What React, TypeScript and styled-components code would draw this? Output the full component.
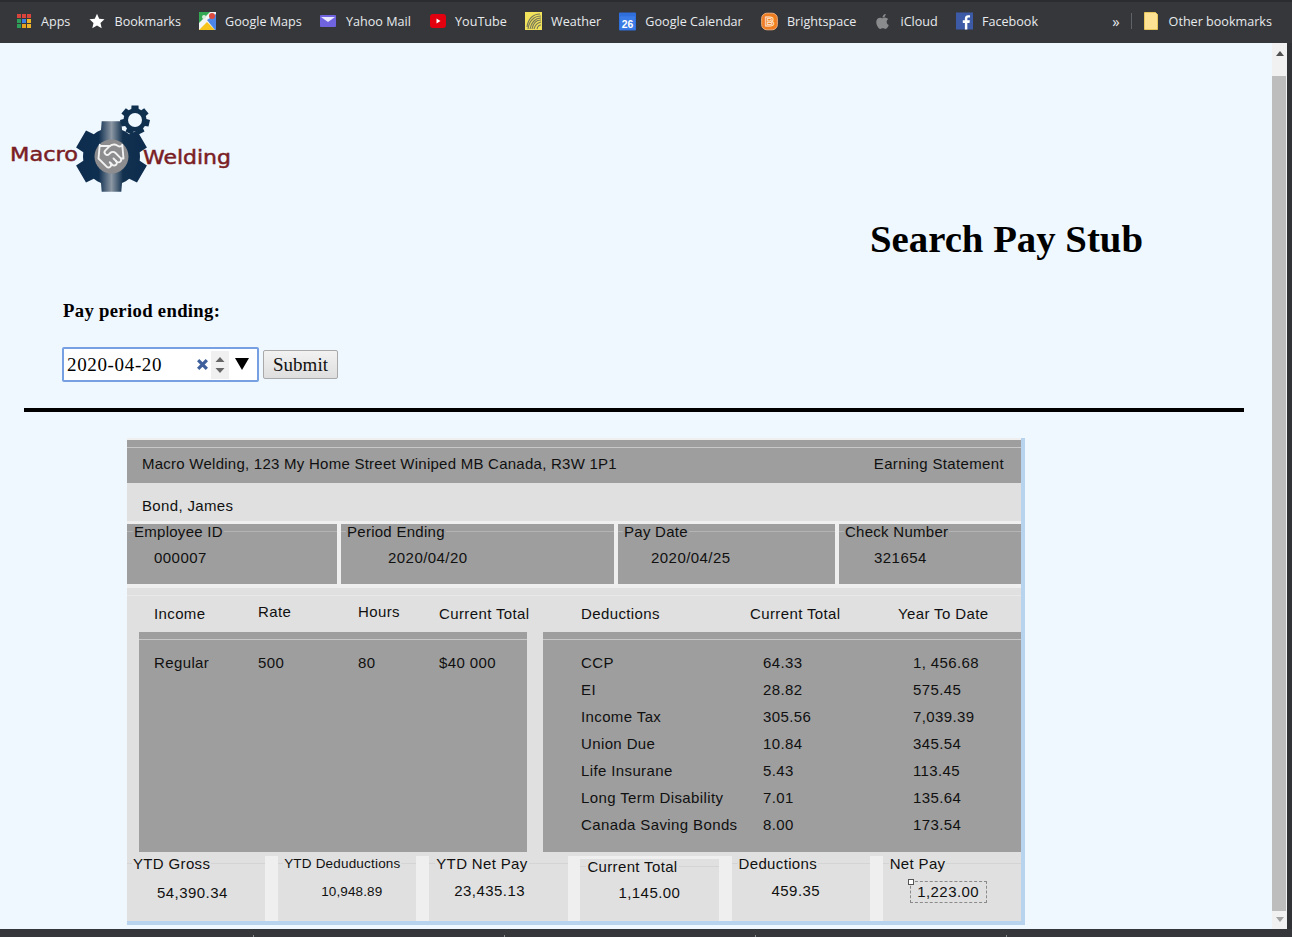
import React from 'react';
import styled, { createGlobalStyle } from 'styled-components';
import { Handshake } from 'lucide-react';
import { FaApple } from 'react-icons/fa';

const GlobalStyle = createGlobalStyle`
    html, body {
        margin: 0;
        padding: 0;
        height: 100%;
        overflow: hidden;
        background: #eff7ff;
    }
`;

// builds a cog outline from the number of teeth and its radii
const gearPath = (cx: number, cy: number, outer: number, inner: number, teeth: number) => {
    const points: string[] = [];
    const step = (Math.PI * 2) / teeth;
    for (let i = 0; i < teeth; i++) {
        const a = i * step - Math.PI / 2;
        const at = (r: number, o: number) =>
            `${(cx + r * Math.cos(a + o * step)).toFixed(1)} ${(cy + r * Math.sin(a + o * step)).toFixed(1)}`;
        points.push(at(outer, -0.26), at(outer, 0.26), at(inner, 0.36), at(inner, 0.5), at(inner, 0.64));
    }
    return `M${points.join('L')}Z`;
};

const AppsIcon = () => {
    const colors = ['#d9453c', '#d9453c', '#d9453c', '#2f9e58', '#3f7fe0', '#f0b429', '#2f9e58', '#e8a020', '#f0b429'];
    return (
        <svg width="16" height="16" viewBox="0 0 16 16">
            {colors.map((c, i) => (
                <rect key={i} x={1 + (i % 3) * 5} y={1 + Math.floor(i / 3) * 5} width="4" height="4" fill={c} />
            ))}
        </svg>
    );
};

const StarIcon = () => (
    <svg width="16" height="16" viewBox="0 0 16 16">
        <path d="M8 .8l2.2 5 5.3.5-4 3.6 1.2 5.3L8 12.4l-4.7 2.8 1.2-5.3-4-3.6 5.3-.5z" fill="#fff" />
    </svg>
);

const MapsIcon = () => (
    <svg width="17" height="18" viewBox="0 0 17 18">
        <rect width="17" height="18" fill="#35a853" />
        <path d="M0 18V11L11 0h6v18z" fill="#f4f4f4" />
        <path d="M0 18l8-8 8 8z" fill="#f6c41c" />
        <path d="M8 8l9-6v16h-1z" fill="#4b86e8" />
        <circle cx="13" cy="4" r="3" fill="#dd4b3e" />
        <circle cx="5" cy="5" r="2" fill="#d8efdc" />
    </svg>
);

const YahooIcon = () => (
    <svg width="16" height="12" viewBox="0 0 16 12">
        <rect width="16" height="12" rx="1" fill="#6f63e0" />
        <path d="M1 2h14L8 7z" fill="#e9e6ff" />
    </svg>
);

const YoutubeIcon = () => (
    <svg width="16" height="14" viewBox="0 0 16 14">
        <rect width="16" height="14" rx="3" fill="#e3000f" />
        <path d="M6.5 4.5v5l4-2.5z" fill="#fff" />
    </svg>
);

const WeatherIcon = () => (
    <svg width="17" height="18" viewBox="0 0 17 18">
        <rect width="17" height="18" fill="#f0e25a" />
        <path
            d="M2 15C3 7 8 2 15 2M3 17C4 9 9 4 16 4M5 17C6 11 10 6 16 6M7 17C8 12 11 8 16 8M9 17c1-4 3-6 7-7M12 17c.5-2 2-4 4-4"
            stroke="#77775a"
            strokeWidth="1.1"
            fill="none"
        />
    </svg>
);

const CalendarIcon = () => (
    <svg width="18" height="19" viewBox="0 0 18 19">
        <rect width="18" height="19" rx="1" fill="#2f6fdc" />
        <rect x="1" y="4" width="16" height="14" fill="#3a7be6" />
        <text x="9" y="16" textAnchor="middle" fontFamily="Liberation Sans, sans-serif" fontWeight="700" fontSize="11" fill="#fff">
            26
        </text>
    </svg>
);

const BrightspaceIcon = () => (
    <svg width="18" height="19" viewBox="0 0 18 19">
        <rect x="0.7" y="0.7" width="16.6" height="17.6" rx="5.5" fill="#ef7d22" stroke="#f5b27c" />
        <text
            x="9"
            y="14.5"
            textAnchor="middle"
            fontFamily="Liberation Sans, sans-serif"
            fontWeight="700"
            fontSize="14"
            fill="#ef7d22"
            stroke="#ffe8d2"
            strokeWidth="0.9"
        >
            B
        </text>
    </svg>
);

const FacebookIcon = () => (
    <svg width="18" height="18" viewBox="0 0 18 18">
        <rect width="18" height="18" fill="#3c5aa6" />
        <path d="M12 18v-7h2.3l.4-2.7H12V6.6c0-.8.3-1.3 1.4-1.3h1.4V2.9c-.3 0-1.1-.1-2-.1-2 0-3.4 1.2-3.4 3.5v2H7.2V11h2.2v7z" fill="#fff" />
    </svg>
);

const NoteIcon = () => (
    <svg width="14" height="18" viewBox="0 0 14 18">
        <path d="M.5.5h11l2 2v15H.5z" fill="#fde293" stroke="#e8c65c" />
    </svg>
);

const bookmarks = [
    { label: 'Apps', icon: <AppsIcon /> },
    { label: 'Bookmarks', icon: <StarIcon /> },
    { label: 'Google Maps', icon: <MapsIcon /> },
    { label: 'Yahoo Mail', icon: <YahooIcon /> },
    { label: 'YouTube', icon: <YoutubeIcon /> },
    { label: 'Weather', icon: <WeatherIcon /> },
    { label: 'Google Calendar', icon: <CalendarIcon /> },
    { label: 'Brightspace', icon: <BrightspaceIcon /> },
    { label: 'iCloud', icon: <FaApple size={17} color="#8a8b8d" /> },
    { label: 'Facebook', icon: <FacebookIcon /> },
];

const earnings = [{ name: 'Regular', rate: '500', hours: '80', total: '$40 000' }];

const deductions = [
    { name: 'CCP', current: '64.33', ytd: '1, 456.68' },
    { name: 'EI', current: '28.82', ytd: '575.45' },
    { name: 'Income Tax', current: '305.56', ytd: '7,039.39' },
    { name: 'Union Due', current: '10.84', ytd: '345.54' },
    { name: 'Life Insurane', current: '5.43', ytd: '113.45' },
    { name: 'Long Term Disability', current: '7.01', ytd: '135.64' },
    { name: 'Canada Saving Bonds', current: '8.00', ytd: '173.54' },
];

const Logo = () => (
    <LogoBox>
        <svg width="222" height="92" viewBox="0 0 222 92">
            <defs>
                <linearGradient id="steel" x1="0" x2="1" y1="0" y2="0">
                    <stop offset="0" stopColor="#0d2c4e" />
                    <stop offset="0.32" stopColor="#0f2f50" />
                    <stop offset="0.5" stopColor="#8c97a3" />
                    <stop offset="0.66" stopColor="#12314f" />
                    <stop offset="1" stopColor="#0d2c4e" />
                </linearGradient>
            </defs>
            <path d={gearPath(101.5, 53.5, 36.5, 28.5, 6)} fill="url(#steel)" />
            <circle cx="101.5" cy="53.5" r="17" fill="#8d8d8f" />
            <path d={gearPath(125, 17, 15, 11.5, 7)} fill="#10304f" />
            <circle cx="125" cy="17" r="7" fill="#eff7ff" />
            <text
                x="0"
                y="58"
                fontFamily="DejaVu Sans, sans-serif"
                fontSize="20"
                fill="#7a1d24"
                stroke="#7a1d24"
                strokeWidth="0.5"
                textLength="68"
                lengthAdjust="spacingAndGlyphs"
            >
                Macro
            </text>
            <text
                x="133"
                y="61"
                fontFamily="DejaVu Sans, sans-serif"
                fontSize="20"
                fill="#7a1d24"
                stroke="#7a1d24"
                strokeWidth="0.5"
                textLength="88"
                lengthAdjust="spacingAndGlyphs"
            >
                Welding
            </text>
        </svg>
        <LogoMark>
            <Handshake size={30} color="#f2f2f2" strokeWidth={1.5} />
        </LogoMark>
    </LogoBox>
);

const App = () => {
    return (
        <Screen>
            <GlobalStyle />
            <BookmarkBar>
                <BookmarkList>
                    {bookmarks.map((b) => (
                        <Bookmark key={b.label}>
                            <BookmarkIcon>{b.icon}</BookmarkIcon>
                            {b.label}
                        </Bookmark>
                    ))}
                </BookmarkList>
                <MoreChevron>»</MoreChevron>
                <BarDivider />
                <Bookmark>
                    <BookmarkIcon>
                        <NoteIcon />
                    </BookmarkIcon>
                    Other bookmarks
                </Bookmark>
            </BookmarkBar>

            <Viewport>
                <Page>
                    <Logo />
                    <Title>Search Pay Stub</Title>
                    <SearchForm>
                        <PeriodLabel htmlFor="period">Pay period ending:</PeriodLabel>
                        <FormRow>
                            <DateField>
                                <DateInput id="period" defaultValue="2020-04-20" readOnly />
                                <ClearMark viewBox="0 0 12 12">
                                    <path d="M2 2l8 8M10 2l-8 8" stroke="#3d5f9c" strokeWidth="3" />
                                </ClearMark>
                                <Spinner>
                                    <svg width="10" height="28" viewBox="0 0 10 28">
                                        <path d="M5 6l4.5 5H.5zM.5 17h9L5 22z" fill="#666" />
                                    </svg>
                                </Spinner>
                                <DropTriangle viewBox="0 0 14 12">
                                    <path d="M0 0h14L7 12z" fill="#000" />
                                </DropTriangle>
                            </DateField>
                            <SubmitButton type="button">Submit</SubmitButton>
                        </FormRow>
                    </SearchForm>
                    <Rule />

                    <Statement>
                        <Band>
                            <BandLine>
                                <CompanyRow>
                                    <CompanyName>Macro Welding, 123 My Home Street Winiped MB Canada, R3W 1P1</CompanyName>
                                    <span>Earning Statement</span>
                                </CompanyRow>
                            </BandLine>
                        </Band>
                        <EmployeeName>Bond, James</EmployeeName>

                        <InfoGrid>
                            <InfoCell>
                                <Field>
                                    <FieldLabel>Employee ID</FieldLabel>
                                    <FieldValue $indent={20}>000007</FieldValue>
                                </Field>
                            </InfoCell>
                            <InfoCell>
                                <Field>
                                    <FieldLabel $offset={5}>Period Ending</FieldLabel>
                                    <FieldValue $indent={40}>2020/04/20</FieldValue>
                                </Field>
                            </InfoCell>
                            <InfoCell>
                                <Field>
                                    <FieldLabel $offset={5}>Pay Date</FieldLabel>
                                    <FieldValue $indent={26}>2020/04/25</FieldValue>
                                </Field>
                            </InfoCell>
                            <InfoCell>
                                <Field>
                                    <FieldLabel $offset={5}>Check Number</FieldLabel>
                                    <FieldValue $indent={28}>321654</FieldValue>
                                </Field>
                            </InfoCell>
                        </InfoGrid>

                        <Details>
                            <DetailHeads>
                                <EarningsRow>
                                    <span>Income</span>
                                    <RaisedHead>Rate</RaisedHead>
                                    <RaisedHead>Hours</RaisedHead>
                                    <span>Current Total</span>
                                </EarningsRow>
                                <DeductionsRow>
                                    <span>Deductions</span>
                                    <span>Current Total</span>
                                    <span>Year To Date</span>
                                </DeductionsRow>
                            </DetailHeads>
                            <DetailPanels>
                                <Band>
                                    <BandLine>
                                        <PanelBody>
                                            {earnings.map((e) => (
                                                <EarningsRow key={e.name}>
                                                    <span>{e.name}</span>
                                                    <span>{e.rate}</span>
                                                    <span>{e.hours}</span>
                                                    <span>{e.total}</span>
                                                </EarningsRow>
                                            ))}
                                        </PanelBody>
                                    </BandLine>
                                </Band>
                                <Band>
                                    <BandLine>
                                        <PanelBody>
                                            {deductions.map((d) => (
                                                <DeductionValues key={d.name}>
                                                    <span>{d.name}</span>
                                                    <span>{d.current}</span>
                                                    <span>{d.ytd}</span>
                                                </DeductionValues>
                                            ))}
                                        </PanelBody>
                                    </BandLine>
                                </Band>
                            </DetailPanels>
                        </Details>

                        <TotalsGrid>
                            <TotalCell>
                                <TotalField>
                                    <TotalLabel $offset={5}>YTD Gross</TotalLabel>
                                    <TotalValue $indent={23} $drop={1}>54,390.34</TotalValue>
                                </TotalField>
                            </TotalCell>
                            <TotalCell>
                                <TotalField>
                                    <SmallLabel $offset={5}>YTD Deduductions</SmallLabel>
                                    <SmallValue $indent={36}>10,948.89</SmallValue>
                                </TotalField>
                            </TotalCell>
                            <TotalCell>
                                <TotalField>
                                    <TotalLabel>YTD Net Pay</TotalLabel>
                                    <TotalValue $indent={18} $drop={-1}>23,435.13</TotalValue>
                                </TotalField>
                            </TotalCell>
                            <TotalCell $inset>
                                <TotalField>
                                    <TotalLabel>Current Total</TotalLabel>
                                    <TotalValue $indent={31} $drop={-2}>1,145.00</TotalValue>
                                </TotalField>
                            </TotalCell>
                            <TotalCell>
                                <TotalField>
                                    <TotalLabel>Deductions</TotalLabel>
                                    <TotalValue $indent={33} $drop={-1}>459.35</TotalValue>
                                </TotalField>
                            </TotalCell>
                            <TotalCell>
                                <TotalField>
                                    <TotalLabel>Net Pay</TotalLabel>
                                    <SelectedValue>
                                        <ResizeHandle />
                                        1,223.00
                                    </SelectedValue>
                                </TotalField>
                            </TotalCell>
                        </TotalsGrid>
                    </Statement>
                </Page>
                <ScrollBar>
                    <ScrollArrow viewBox="0 0 8 5">
                        <path d="M4 0l4 5H0z" fill="#505050" />
                    </ScrollArrow>
                    <ScrollThumb />
                    <ScrollArrow viewBox="0 0 8 5">
                        <path d="M0 0h8L4 5z" fill="#a3a3a3" />
                    </ScrollArrow>
                </ScrollBar>
                <RightGutter />
            </Viewport>
            <BottomBar>
                <BarTick />
                <BarTick />
                <BarTick />
                <BarTick />
            </BottomBar>
        </Screen>
    );
};

const Screen = styled.div`
    width: 1292px;
    height: 937px;
    display: flex;
    flex-direction: column;
    overflow: hidden;
    background: #eff7ff;
`;

const BookmarkBar = styled.div`
    flex: none;
    height: 43px;
    box-sizing: border-box;
    border-top: 2px solid #2b2c2f;
    background: #35373b;
    display: flex;
    align-items: center;
    padding: 0 20px 3px 15px;
    color: #e8eaed;
    font-family: 'Open Sans', sans-serif;
    font-size: 12.6px;
`;

const BookmarkList = styled.div`
    display: flex;
    align-items: center;
    gap: 18.2px;
    flex: 1;
`;

const Bookmark = styled.div`
    display: flex;
    align-items: center;
    gap: 9px;
    white-space: nowrap;
`;

const BookmarkIcon = styled.span`
    display: flex;
    align-items: center;
    justify-content: center;
    width: 17px;
`;

const MoreChevron = styled.span`
    font-size: 15px;
    margin-right: 11px;
`;

const BarDivider = styled.span`
    width: 1px;
    height: 16px;
    background: #5f6368;
    margin-right: 11px;
`;

const Viewport = styled.div`
    flex: 1;
    min-height: 0;
    display: flex;
`;

const Page = styled.main`
    width: 1272px;
    flex: none;
    padding-top: 60px;
    font-family: 'Liberation Serif', serif;
    color: #000;
`;

const LogoBox = styled.div`
    position: relative;
    width: 222px;
    height: 92px;
    margin-left: 10px;
`;

const LogoMark = styled.span`
    position: absolute;
    left: 86px;
    top: 38px;
    display: flex;
`;

const Title = styled.h1`
    margin: 21px 129px 0 0;
    text-align: right;
    font-size: 38.8px;
    line-height: 46px;
    font-weight: 700;
`;

const SearchForm = styled.form`
    margin: 38px 0 0 62px;
`;

const PeriodLabel = styled.label`
    display: block;
    margin-left: 1px;
    font-size: 18.67px;
    font-weight: 700;
    line-height: 22px;
    letter-spacing: 0.33px;
`;

const FormRow = styled.div`
    margin-top: 25px;
    display: flex;
    align-items: center;
    gap: 4px;
`;

const DateField = styled.div`
    width: 197px;
    height: 35px;
    box-sizing: border-box;
    border: 2px solid #76a0e2;
    border-radius: 2px;
    background: #fff;
    display: flex;
    align-items: center;
    padding-left: 3px;
`;

const DateInput = styled.input`
    width: 129px;
    border: 0;
    outline: 0;
    padding: 0;
    background: transparent;
    font-family: 'Liberation Serif', serif;
    font-size: 19px;
    letter-spacing: 0.65px;
    color: #000;
`;

const ClearMark = styled.svg`
    width: 13px;
    height: 13px;
`;

const Spinner = styled.span`
    width: 18px;
    height: 28px;
    margin-left: 2px;
    background: #f0f0f0;
    display: flex;
    align-items: center;
    justify-content: center;
`;

const DropTriangle = styled.svg`
    width: 14px;
    height: 12px;
    margin: 0 0 2px 6px;
`;

const SubmitButton = styled.button`
    width: 75px;
    height: 29px;
    padding: 0;
    border: 1px solid #a9a9a9;
    border-radius: 2px;
    background: linear-gradient(#f2f2f2, #dedede);
    font-family: 'Liberation Serif', serif;
    font-size: 19px;
    color: #111;
`;

const Rule = styled.hr`
    width: 1220px;
    height: 4px;
    margin: 26px 0 0 24px;
    border: 0;
    background: #000;
`;

const Statement = styled.section`
    width: 894px;
    margin: 26px 0 0 127px;
    padding-top: 2px;
    border-right: 4px solid #b8d3ee;
    border-bottom: 4px solid #b8d3ee;
    background: #efefef;
    font-family: 'Liberation Sans', sans-serif;
    font-size: 15px;
    letter-spacing: 0.35px;
    color: #101010;
`;

const Band = styled.div`
    padding-top: 7px;
    background: #9e9e9e;
`;

const BandLine = styled.div`
    border-top: 1px solid #c8c8c8;
`;

const CompanyRow = styled.div`
    height: 35px;
    display: flex;
    justify-content: space-between;
    align-items: center;
    padding: 0 17px 5px 15px;
    box-sizing: border-box;
`;

const CompanyName = styled.span`
    letter-spacing: 0.25px;
`;

const EmployeeName = styled.div`
    height: 38px;
    padding: 14px 0 0 15px;
    box-sizing: border-box;
    background: #e0e0e0;
`;

const InfoGrid = styled.div`
    display: grid;
    grid-template-columns: 210px 273px 217px 182px;
    column-gap: 4px;
    margin-top: 3px;
`;

const InfoCell = styled.div`
    height: 60px;
    background: #9e9e9e;
`;

const Field = styled.fieldset`
    margin: 0;
    padding: 0;
    height: 100%;
    box-sizing: border-box;
    border: 0;
    border-top: 1px solid #b4b4b4;
    min-inline-size: 0;
`;

const FieldLabel = styled.legend<{ $offset?: number }>`
    margin-left: ${(p) => p.$offset ?? 6}px;
    padding: 0 1px;
    font-size: 15px;
    line-height: 15px;
    letter-spacing: 0.27px;
`;

const TotalLabel = styled(FieldLabel)`
    letter-spacing: 0.35px;
`;

const SmallLabel = styled(FieldLabel)`
    font-size: 13.5px;
    letter-spacing: 0.19px;
`;

const FieldValue = styled.div<{ $indent: number }>`
    margin: 10px 0 0 ${(p) => p.$indent + 7}px;
    letter-spacing: 0.45px;
`;

const Details = styled.div`
    margin-top: 4px;
    background: #e0e0e0;
    padding-top: 7px;
    letter-spacing: 0.38px;
`;

const DetailHeads = styled.div`
    border-top: 1px solid #e8e8e8;
    height: 37px;
    padding: 0 0 1px 12px;
    box-sizing: border-box;
    display: grid;
    grid-template-columns: 388px 478px;
    column-gap: 16px;
    align-items: center;
`;

const EarningsRow = styled.div`
    display: grid;
    grid-template-columns: 104px 100px 81px 1fr;
    padding-left: 15px;
    white-space: nowrap;
`;

const RaisedHead = styled.span`
    margin-top: -2px;
`;

const DeductionsRow = styled.div`
    display: grid;
    grid-template-columns: 169px 148px 1fr;
    padding-left: 38px;
    white-space: nowrap;
`;

const DetailPanels = styled.div`
    padding-left: 12px;
    display: grid;
    grid-template-columns: 388px 478px;
    column-gap: 16px;
    height: 220px;

    ${Band} {
        height: 100%;
        box-sizing: border-box;
    }
`;

const PanelBody = styled.div`
    padding-top: 14px;
    display: flex;
    flex-direction: column;
    row-gap: 10px;
    line-height: 17px;
`;

const DeductionValues = styled.div`
    display: grid;
    grid-template-columns: 182px 150px 1fr;
    padding-left: 38px;
    white-space: nowrap;
`;

const TotalsGrid = styled.div`
    display: grid;
    grid-template-columns: repeat(6, 1fr);
    column-gap: 12.8px;
    height: 69px;
    box-sizing: border-box;
    border-top: 4px solid #e0e0e0;
`;

const TotalCell = styled.div<{ $inset?: boolean }>`
    background: #e0e0e0;
    box-sizing: border-box;
    border-top: ${(p) => (p.$inset ? '3px solid #efefef' : '0')};
`;

const TotalField = styled.fieldset`
    margin: 0;
    padding: 0;
    height: 100%;
    box-sizing: border-box;
    border: 0;
    border-top: 1px solid #d4d4d4;
    min-inline-size: 0;
`;

const TotalValue = styled.div<{ $indent: number; $drop?: number }>`
    margin: ${(p) => 12 + (p.$drop || 0)}px 0 0 ${(p) => p.$indent + 7}px;
    letter-spacing: 0.45px;
    line-height: 17px;
`;

const SmallValue = styled(TotalValue)`
    font-size: 13.5px;
    letter-spacing: 0.12px;
`;

const SelectedValue = styled.div`
    position: relative;
    width: 77px;
    height: 22px;
    box-sizing: border-box;
    margin: 10px 0 0 27px;
    border: 1px dashed #8a8a8a;
    letter-spacing: 0.45px;
    text-align: center;
    line-height: 20px;
`;

const ResizeHandle = styled.span`
    position: absolute;
    left: -3px;
    top: -3px;
    width: 4px;
    height: 4px;
    background: #fff;
    border: 1px solid #555;
`;

const ScrollBar = styled.aside`
    width: 15px;
    flex: none;
    box-sizing: border-box;
    padding: 8px 0 7px;
    background: #f1f1f1;
    display: flex;
    flex-direction: column;
    align-items: center;
`;

const ScrollArrow = styled.svg`
    flex: none;
    width: 8px;
    height: 5px;
`;

const ScrollThumb = styled.div`
    flex: 1;
    align-self: flex-start;
    width: 14px;
    margin: 20px 0 6px;
    background: #bdbdbd;
`;

const RightGutter = styled.div`
    flex: 1;
    background: #303236;
`;

const BottomBar = styled.footer`
    flex: none;
    height: 8px;
    box-sizing: border-box;
    padding-left: 253px;
    background: #35373b;
    display: flex;
    align-items: flex-end;
    gap: 250px;
`;

const BarTick = styled.span`
    width: 1px;
    height: 2px;
    background: #8a8b8d;
`;

export default App;
